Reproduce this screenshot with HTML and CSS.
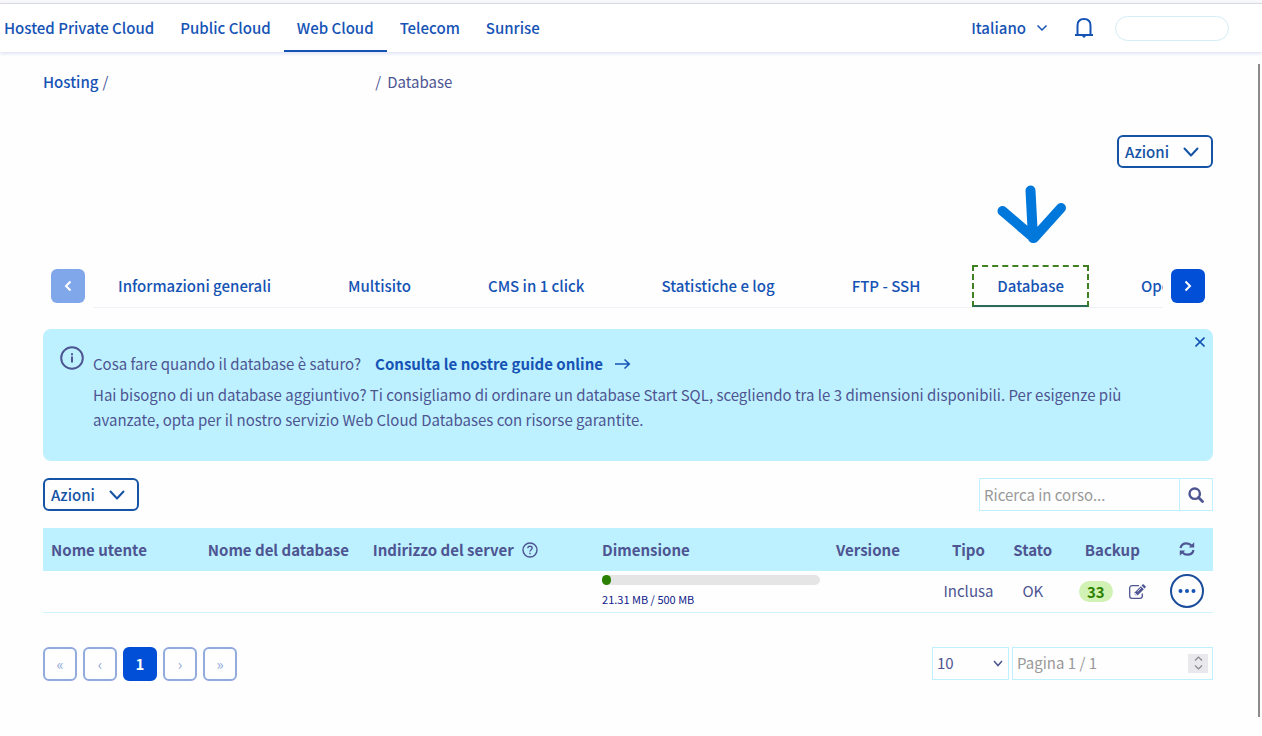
FILE: index.html
```html
<!DOCTYPE html>
<html lang="it">
<head>
<meta charset="utf-8">
<title>Database - Hosting</title>
<link rel="stylesheet" href="styles.css">
</head>
<body>
<div class="window-edge"></div>
<header class="header">
  <nav class="universe" aria-label="Universi">
    <a class="universe-link" href="#">Hosted Private Cloud</a>
    <a class="universe-link" href="#">Public Cloud</a>
    <a class="universe-link active" href="#" aria-current="page">Web Cloud</a>
    <a class="universe-link" href="#">Telecom</a>
    <a class="universe-link" href="#">Sunrise</a>
  </nav>
  <div class="tools">
    <button class="language" type="button">Italiano
      <svg width="12" height="8" viewBox="0 0 12 8" fill="none" stroke="currentColor" stroke-width="1.5"><path d="M1.500 1.500 6 6l4.500-4.500"/></svg>
    </button>
    <button class="bell" type="button" aria-label="Notifiche">
      <svg width="20" height="22" viewBox="0 0 20 22" fill="none" stroke="currentColor" stroke-width="2"><path d="M1 18h18M3.500 18V8.500C3.500 4.500 6 2 10 2s6.500 2.500 6.500 6.500V18"/><path d="M7.500 18.500h5L10 21z" fill="currentColor" stroke="none"/></svg>
    </button>
    <button class="account" type="button" aria-label="Account"></button>
  </div>
</header>
<div class="scroller">
<main class="page">
  <nav class="breadcrumb" aria-label="Percorso">
    <a href="#">Hosting</a><span>/</span><span class="crumb-blank"></span><span>/</span><span class="crumb-current">Database</span>
  </nav>
  <div class="title-row">
    <button class="actions" type="button">Azioni
      <svg width="16" height="10" viewBox="0 0 16 10" fill="none" stroke="currentColor" stroke-width="2" stroke-linecap="round" stroke-linejoin="round"><path d="m1.500 1.500 6.500 7 6.500-7"/></svg>
    </button>
  </div>
  <div class="tabs">
    <button class="tab-arrow disabled" type="button" aria-label="Precedente">
      <svg width="8" height="12" viewBox="0 0 8 12" fill="none" stroke="currentColor" stroke-width="2"><path d="M6.500 1.500 2 6l4.500 4.500"/></svg>
    </button>
    <nav class="tab-list" aria-label="Sezioni">
      <a class="tab" href="#">Informazioni generali</a>
      <a class="tab" href="#">Multisito</a>
      <a class="tab" href="#">CMS in 1 click</a>
      <a class="tab" href="#">Statistiche e log</a>
      <a class="tab" href="#">FTP - SSH</a>
      <a class="tab current" href="#">Database
        <svg class="pointer" width="70" height="60" viewBox="0 0 70 60" fill="none" stroke="#0078db" stroke-width="10" stroke-linecap="round" stroke-linejoin="round"><path d="M33.500 5.500 36 53M5.500 26 37 53 64 23"/></svg>
      </a>
      <a class="tab" href="#">Operazioni</a>
    </nav>
    <button class="tab-arrow" type="button" aria-label="Successivo">
      <svg width="8" height="12" viewBox="0 0 8 12" fill="none" stroke="currentColor" stroke-width="2"><path d="M1.500 1.500 6 6l-4.500 4.500"/></svg>
    </button>
  </div>
  <section class="notice">
    <svg class="notice-icon" width="24" height="24" viewBox="0 0 24 24" fill="none" stroke="currentColor" stroke-width="2"><circle cx="12" cy="12" r="10.800"/><path d="M12 10.500V16.500M12 7.300v2"/></svg>
    <div class="notice-body">
      <p class="notice-lead">Cosa fare quando il database è saturo?
        <a href="#">Consulta le nostre guide online
          <svg width="16" height="12" viewBox="0 0 16 12" fill="none" stroke="currentColor" stroke-width="1.500"><path d="M0 6h14M9.500 1.500 14.300 6l-4.800 4.500"/></svg>
        </a>
      </p>
      <p>Hai bisogno di un database aggiuntivo? Ti consigliamo di ordinare un database Start SQL, scegliendo tra le 3 dimensioni disponibili. Per esigenze più avanzate, opta per il nostro servizio Web Cloud Databases con risorse garantite.</p>
    </div>
    <button class="notice-close" type="button" aria-label="Chiudi">
      <svg width="10" height="10" viewBox="0 0 10 10" fill="none" stroke="currentColor" stroke-width="1.600"><path d="m.5.5 9 9M9.500.5l-9 9"/></svg>
    </button>
  </section>
  <div class="toolbar">
    <button class="actions" type="button">Azioni
      <svg width="16" height="10" viewBox="0 0 16 10" fill="none" stroke="currentColor" stroke-width="2" stroke-linecap="round" stroke-linejoin="round"><path d="m1.500 1.500 6.500 7 6.500-7"/></svg>
    </button>
    <form class="search">
      <input type="search" aria-label="Ricerca" placeholder="Ricerca in corso...">
      <button type="button" aria-label="Cerca">
        <svg width="16" height="16" viewBox="0 0 16 16" fill="none" stroke="currentColor"><circle cx="6.700" cy="6.700" r="5.200" stroke-width="2.400"/><path d="m10.500 10.500 4 4" stroke-width="2.800" stroke-linecap="round"/></svg>
      </button>
    </form>
  </div>
  <table class="grid">
    <colgroup><col class="c-user"><col class="c-name"><col class="c-server"><col class="c-size"><col class="c-version"><col class="c-type"><col class="c-state"><col class="c-backup"><col class="c-menu"></colgroup>
    <thead>
      <tr>
        <th>Nome utente</th>
        <th>Nome del database</th>
        <th><span class="with-icon">Indirizzo del server
          <svg width="16" height="16" viewBox="0 0 16 16" fill="none" stroke="currentColor" stroke-width="1.400"><circle cx="8" cy="8" r="7"/><path d="M5.800 6.300C5.900 4.900 6.800 4.200 8 4.200s2.200.7 2.200 1.900c0 1.500-2.200 1.700-2.200 3.500M8 10.700v1.600"/></svg></span></th>
        <th>Dimensione</th>
        <th>Versione</th>
        <th class="mid">Tipo</th>
        <th class="mid">Stato</th>
        <th class="mid">Backup</th>
        <th class="mid"><button class="plain refresh" type="button" aria-label="Aggiorna">
          <svg width="16" height="14" viewBox="0 0 16 14" fill="none" stroke="currentColor" stroke-width="2.200"><path d="M1.500 6C2 3.300 4.500 1.300 7.600 1.300c2 0 3.700.9 4.900 2.200M14.500 8c-.5 2.700-3 4.700-6.100 4.700-2 0-3.700-.9-4.900-2.200"/><path d="M15.200.3v5.300H9.800zM.8 13.700V8.400h5.400z" fill="currentColor" stroke="none"/></svg></button></th>
      </tr>
    </thead>
    <tbody>
      <tr>
        <td></td>
        <td></td>
        <td></td>
        <td class="size"><div class="meter"><div class="meter-fill"></div></div><div class="meter-text">21.31 MB / 500 MB</div></td>
        <td></td>
        <td class="mid">Inclusa</td>
        <td class="mid">OK</td>
        <td><div class="backup"><span class="badge">33</span><button class="plain" type="button" aria-label="Modifica">
          <svg width="17" height="15" viewBox="0 0 17 15" fill="none" stroke="currentColor" stroke-width="1.300"><path d="M10 1.700H3A2.300 2.300 0 0 0 .7 4v8A2.300 2.300 0 0 0 3 14.300h8a2.300 2.300 0 0 0 2.300-2.300V9.500"/><path d="M5.800 11.300V8.200l6-6 3 3-6 6.100z" fill="currentColor" stroke="none"/><path d="m12.500 1.500 1.100-1.100c.3-.3.800-.3 1.100 0l1.900 1.900c.3.300.3.800 0 1.100l-1.100 1.100z" fill="currentColor" stroke="none"/><path d="m8.500 7.500 3.700-3.700M6.500 9v1.600h1.600" stroke="#fff" stroke-width=".8"/></svg></button></div></td>
        <td class="mid"><button class="more" type="button" aria-label="Altre azioni">
          <svg width="18" height="4" viewBox="0 0 18 4" fill="currentColor"><circle cx="2.500" cy="2" r="2"/><circle cx="9" cy="2" r="2"/><circle cx="15.500" cy="2" r="2"/></svg></button></td>
      </tr>
    </tbody>
  </table>
  <footer class="pager">
    <div class="pages">
      <button type="button" aria-label="Prima pagina">«</button>
      <button type="button" aria-label="Pagina precedente">‹</button>
      <button class="selected" type="button">1</button>
      <button type="button" aria-label="Pagina successiva">›</button>
      <button type="button" aria-label="Ultima pagina">»</button>
    </div>
    <div class="page-tools">
      <div class="select-box">
        <select aria-label="Righe per pagina"><option>10</option><option>25</option></select>
        <svg width="10" height="7" viewBox="0 0 10 7" fill="none" stroke="currentColor" stroke-width="1.500"><path d="m1 1 4 4.500L9 1"/></svg>
      </div>
      <div class="goto">
        <input type="number" aria-label="Pagina" placeholder="Pagina 1 / 1">
        <span class="spinner"><svg width="9" height="14" viewBox="0 0 9 14" fill="none" stroke="currentColor" stroke-width="1.200"><path d="m1 4.500 3.500-3.500L8 4.500M1 9.500 4.500 13 8 9.500"/></svg></span>
      </div>
    </div>
  </footer>
</main>
</div>
</body>
</html>
```
FILE: styles.css
```css
* { box-sizing: border-box; }
body {
  margin: 0;
  min-height: 100vh;
  display: flex;
  flex-direction: column;
  background: #fefefe;
  color: #4d5592;
  font: 15px/24px "Noto Sans CJK SC", "Noto Sans", sans-serif;
}
button, input, select { font: inherit; color: inherit; margin: 0; }
button { cursor: pointer; background: none; border: 0; padding: 0; }
svg { display: block; flex: none; }
a { color: #1553b5; text-decoration: none; font-weight: 500; }
p { margin: 0; }

.window-edge { height: 4px; background: #f9f9fb; border-bottom: 1px solid #d9d9de; }
.header {
  display: flex;
  justify-content: space-between;
  height: 48px;
  padding-right: 33px;
  background: #fff;
  box-shadow: 0 1px 4px #d4d9ee;
}
.universe { display: flex; margin-left: -9px; }
.universe-link { padding: 12px 13px 10px; border-bottom: 2px solid transparent; white-space: nowrap; }
.universe-link.active { border-color: #1553b5; }
.tools { display: flex; align-items: center; gap: 21px; color: #1553b5; }
.language { display: flex; align-items: center; gap: 10px; margin-right: 5px; font-weight: 500; }
.account { width: 114px; height: 25px; border: 1px solid #d3eef6; border-radius: 13px; }

.scroller { flex: 1; margin: 12px 2px 19px 0; border-right: 2px solid #8b8b8b; }
.page { padding: 6px 45px 0 43px; }
.breadcrumb { display: flex; gap: 4px; }
.crumb-blank { width: 259px; }
.crumb-current { margin-left: 2px; }
.title-row { display: flex; justify-content: flex-end; margin-top: 41px; }
.actions {
  display: flex;
  align-items: center;
  gap: 14px;
  height: 33px;
  padding: 0 12px 0 6px;
  border: 2px solid #1553a5;
  border-radius: 6px;
  color: #1553a5;
  font-weight: 500;
}

.tabs { display: flex; align-items: center; gap: 8px; margin-top: 97px; padding: 0 8px; }
.tab-arrow {
  display: grid;
  place-items: center;
  flex: none;
  width: 34px;
  height: 34px;
  margin-bottom: 1px;
  border-radius: 6px;
  background: #004fd6;
  color: #fff;
}
.tab-arrow.disabled { background: #80a7ea; }
.tab-list {
  display: flex;
  gap: 27px;
  flex: 1;
  min-width: 0;
  overflow-x: clip;
  border-bottom: 1px solid #f0f2f8;
}
.tab { position: relative; padding: 9px 25px; white-space: nowrap; }
.tab.current { padding: 7px 23px; border: 2px dashed #3f8022; border-bottom: 2px solid #2b6a55; }
.pointer { position: absolute; left: 23px; top: -82px; }

.notice {
  display: flex;
  align-items: flex-start;
  min-height: 132px;
  margin-top: 21px;
  padding: 8px 8px 24px 17px;
  border-radius: 8px;
  background: #bef1ff;
}
.notice-icon { margin-top: 9px; }
.notice-body { flex: 1; margin: 14px 40px 0 9px; line-height: 25px; }
.notice-lead { display: flex; gap: 14px; margin-bottom: 5px; line-height: 26px; }
.notice-lead a { display: flex; align-items: center; gap: 12px; font-weight: 700; }
.notice-close { color: #1553b5; }

.toolbar { display: flex; justify-content: space-between; margin-top: 17px; }
.search { display: flex; width: 234px; height: 33px; border: 1px solid #bef1ff; }
.search input { flex: 1; min-width: 0; padding: 0 4px; border: 0; background: none; }
.search button { display: grid; place-items: center; width: 33px; border-left: 1px solid #bef1ff; }
::placeholder { color: #999; opacity: 1; }

.grid { width: 100%; margin-top: 17px; table-layout: fixed; border-collapse: collapse; }
.grid th { height: 43px; padding: 0 8px; background: #bef1ff; text-align: left; font-weight: 700; white-space: nowrap; }
.grid td { height: 41px; padding: 0 8px; border-bottom: 1px solid #cdf3fd; }
.grid .mid { padding: 0; text-align: center; }
.c-user { width: 13.4%; }
.c-name { width: 14.1%; }
.c-server { width: 19.6%; }
.c-size { width: 20%; }
.c-version { width: 9.1%; }
.c-type { width: 5.8%; }
.c-state { width: 5.2%; }
.c-backup { width: 8.4%; }
.c-menu { width: 4.4%; }
.with-icon { display: flex; align-items: center; gap: 8px; }
.plain, .more { display: inline-grid; place-items: center; vertical-align: middle; }
.refresh { padding-bottom: 4px; }
.meter { height: 10px; border-radius: 5px; background: #e5e5e5; }
.meter-fill { width: 4.3%; height: 10px; border-radius: 5px; background: #2b8000; }
.meter-text { margin-top: 6px; font-size: 11px; line-height: 16px; color: #10208a; }
.backup { display: flex; align-items: center; justify-content: center; gap: 16px; }
.badge { padding: 0 8px; border-radius: 11px; background: #d2f2b5; color: #2b8000; font-weight: 700; line-height: 21px; }
.more { width: 34px; height: 34px; border: 2px solid #1b4b9b; border-radius: 50%; color: #1553b5; }

.pager { display: flex; justify-content: space-between; margin-top: 34px; }
.pages { display: flex; gap: 6px; }
.pages button { width: 34px; height: 34px; border: 2px solid #93aadc; border-radius: 6px; color: #8fa8d8; line-height: 28px; }
.pages .selected { border-color: #004fd6; background: #004fd6; color: #fff; font-weight: 700; }
.page-tools { display: flex; gap: 3px; }
.select-box, .goto { display: flex; align-items: center; height: 33px; border: 1px solid #bef1ff; }
.select-box { width: 77px; padding-right: 5px; }
.select-box select { flex: 1; min-width: 0; padding: 0 4px; border: 0; background: none; appearance: none; }
.goto { width: 201px; padding-right: 4px; }
.goto input { flex: 1; min-width: 0; padding: 0 4px; border: 0; background: none; appearance: textfield; }
.spinner { display: grid; place-items: center; width: 20px; height: 19px; background: #e9e9ed; color: #888; }
```
